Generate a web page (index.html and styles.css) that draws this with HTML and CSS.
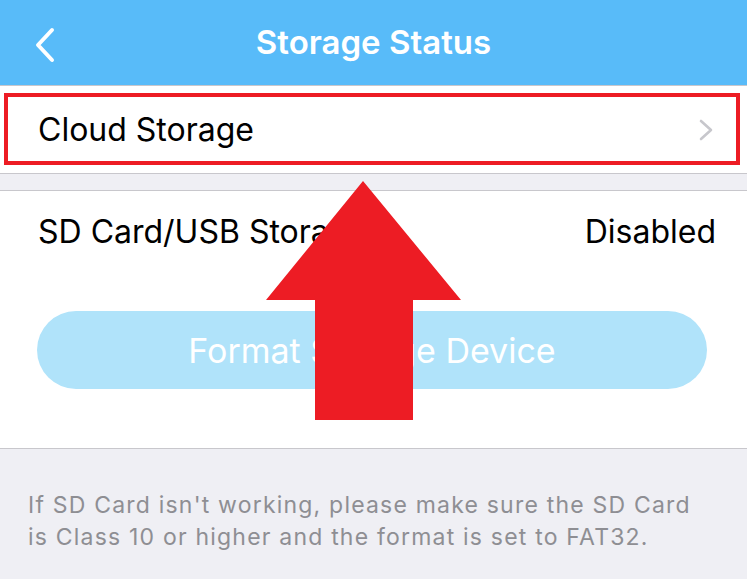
FILE: index.html
```html
<!DOCTYPE html>
<html>
<head>
<meta charset="utf-8">
<link rel="stylesheet" href="styles.css">
</head>
<body>
<div class="screen">
  <header class="nav">
    <svg class="back" width="22" height="36" viewBox="0 0 22 36"><path d="M18 3 L4 18 L18 33" fill="none" stroke="#fff" stroke-width="4" stroke-linecap="round" stroke-linejoin="round"/></svg>
    <h1 class="title">Storage Status</h1>
  </header>
  <section class="group group-top">
    <div class="highlight">
      <div class="row">
        <span class="label">Cloud Storage</span>
        <svg class="chev" width="14" height="22" viewBox="0 0 14 22"><path d="M2 2 L12 11 L2 20" fill="none" stroke="#c7c7cc" stroke-width="2.6" stroke-linecap="round" stroke-linejoin="round"/></svg>
      </div>
    </div>
  </section>
  <div class="spacer"></div>
  <section class="group group-sd">
    <div class="row sd-row">
      <span class="label">SD Card/USB Storage</span>
      <span class="value">Disabled</span>
    </div>
    <div class="btn-wrap">
      <button class="format-btn">Format Storage Device</button>
    </div>
  </section>
  <p class="note">If SD Card isn't working, please make sure the SD Card is Class 10 or higher and the format is set to FAT32.</p>
  <svg class="arrow" width="196" height="241" viewBox="0 0 196 241"><polygon points="97,0 195,119 147,119 147,239 49,239 49,119 0,119" fill="#ed1c24"/></svg>
</div>
</body>
</html>
```
FILE: styles.css
```css
* { box-sizing: border-box; }
html, body { margin: 0; padding: 0; }
body {
  font-family: Inter, Roboto, "Liberation Sans", sans-serif;
  background: #efeff4;
  width: 747px;
  height: 579px;
  overflow: hidden;
}
.screen { position: relative; width: 747px; height: 579px; }
.nav {
  height: 86px;
  background: #58bbf9;
  border-bottom: 1px solid #c8c7cc;
  display: flex;
  align-items: center;
  justify-content: center;
  position: relative;
}
.back { position: absolute; left: 34px; top: 27px; }
.title {
  margin: 0 0 2px 0;
  color: #fff;
  font-size: 33px;
  font-weight: 600;
}
.group { background: #fff; }
.group-top {
  padding: 7px 7px 8px 4px;
  border-bottom: 1px solid #c8c7cc;
}
.highlight {
  border: 4px solid #ed1c24;
  height: 72px;
}
.row {
  display: flex;
  align-items: center;
  justify-content: space-between;
  height: 100%;
  padding: 0 23px 0 30px;
}
.label, .value {
  font-size: 32px;
  color: #000;
}
.chev { margin-top: 2px; }
.spacer {
  height: 17px;
  border-bottom: 1px solid #c8c7cc;
}
.group-sd {
  height: 258px;
  border-bottom: 1px solid #c8c7cc;
  padding-top: 18px;
}
.sd-row { height: 44px; padding: 0 31px 0 38px; }
.btn-wrap { padding: 58px 40px 0 37px; }
.format-btn {
  width: 100%;
  height: 78px;
  border: none;
  border-radius: 39px;
  background: #b0e3fa;
  color: #fff;
  font-family: inherit;
  font-size: 34px;
  padding: 0;
}
.note {
  margin: 0;
  padding: 40px 45px 0 28px;
  font-size: 23px;
  letter-spacing: 1.2px;
  line-height: 32px;
  color: #8e8e93;
}
.arrow { position: absolute; left: 266px; top: 181px; }
```
